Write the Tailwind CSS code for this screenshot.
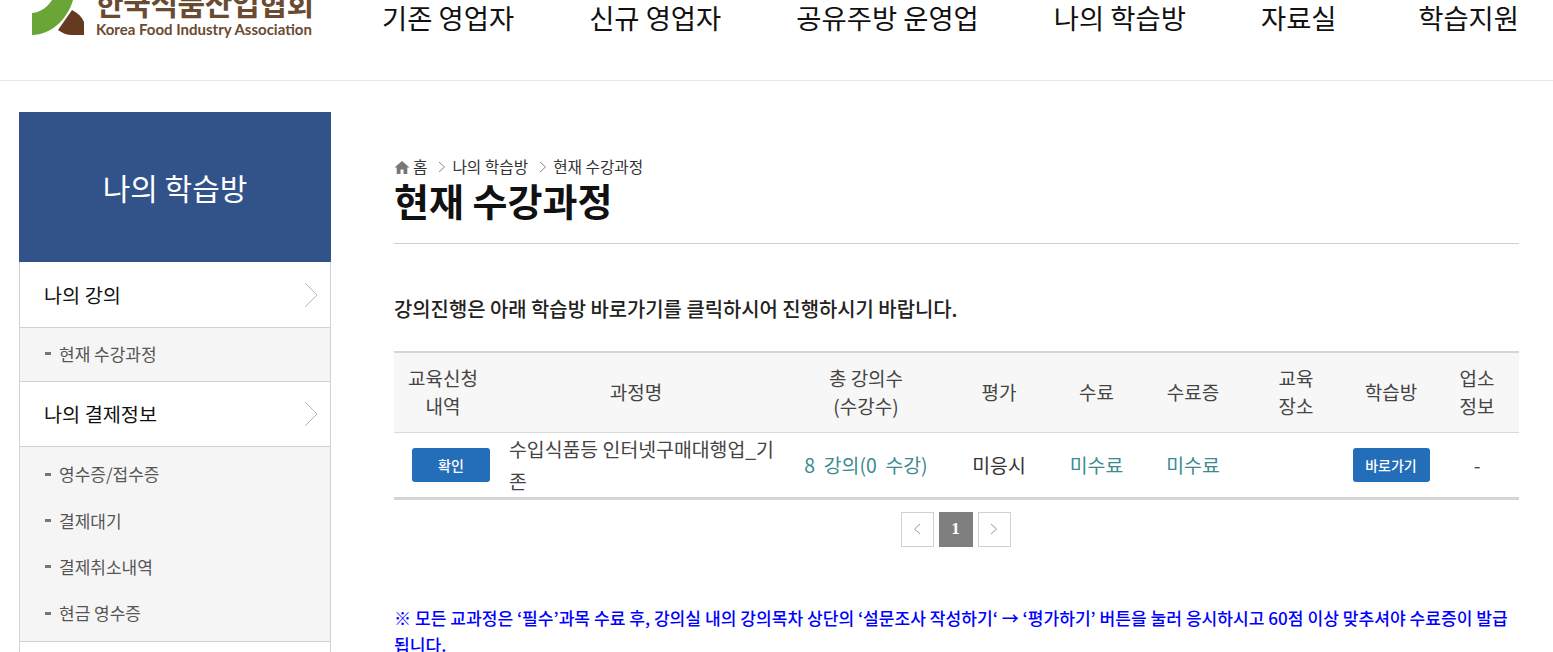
<!doctype html>
<html>
<head>
  <meta charset="UTF-8">
  <meta name="viewport" content="width=device-width, initial-scale=1.0">
  <script src="https://cdn.jsdelivr.net/npm/@tailwindcss/browser@4"></script>
  <title>현재 수강과정</title>
</head>
<body class="bg-white h-[652px] overflow-hidden font-['Noto_Sans_CJK_KR','Noto_Sans',sans-serif] text-[#222]">

  <!-- Header -->
  <header class="h-[81px] border-b border-[#e8e8e8] flex overflow-hidden">
    <div class="w-[382px] pl-[32px] flex items-start shrink-0">
      <svg class="w-[54px] h-[37px] shrink-0" viewBox="0 0 54 37">
        <path d="M0 13 C10 12 16 6 20 0 L41 0 C36 18 20 35 0 35 Z" fill="#69a537"/>
        <path d="M26 30 L40 10 C46 13 50 17 52 22 L52 35 L40 35 C35 35 30 33 26 30 Z" fill="#643b20"/>
      </svg>
      <div class="ml-[10px] text-[#6b4a32] leading-none whitespace-nowrap">
        <div class="text-[30px] font-bold mt-[-13px] h-[30px] tracking-[-0.4px]">한국식품산업협회</div>
        <div class="text-[15px] font-bold mt-[5px] font-['Lato','Noto_Sans',sans-serif]">Korea Food Industry Association</div>
      </div>
    </div>
    <nav class="flex-1 flex gap-[75px] pr-[34px] text-[27.4px] text-[#111] leading-[32px] pt-[1px] whitespace-nowrap">
      <a href="#">기존 영업자</a>
      <a href="#">신규 영업자</a>
      <a href="#">공유주방 운영업</a>
      <a href="#">나의 학습방</a>
      <a href="#">자료실</a>
      <a href="#" class="ml-auto">학습지원</a>
    </nav>
  </header>

  <div class="flex pt-[31px] pl-[19px] pr-[34px]">
    <!-- Sidebar -->
    <aside class="w-[312px] shrink-0">
      <div class="h-[150px] bg-[#315389] text-white text-[30px] flex items-center justify-center">나의 학습방</div>
      <div class="border-x border-[#d2d2d2]">
        <div class="h-[66px] flex items-center justify-between pl-[24px] pr-[11px] border-b border-[#d2d2d2] text-[19.7px] text-[#111]">
          나의 강의
          <svg class="w-[16px] h-[26px]" viewBox="0 0 16 26" fill="none" stroke="#b4b8c0"><path d="M2 1l12 12L2 25"/></svg>
        </div>
        <ul class="bg-[#f5f5f5] h-[53px] flex items-center pl-[25px] pb-[2px] text-[17px] text-[#555]">
          <li class="flex items-center gap-[8px]"><span class="w-[6px] h-[3px] bg-[#777]"></span>현재 수강과정</li>
        </ul>
        <div class="h-[66px] flex items-center justify-between pl-[24px] pr-[11px] border-y border-[#d2d2d2] text-[19.7px] text-[#111]">
          나의 결제정보
          <svg class="w-[16px] h-[26px]" viewBox="0 0 16 26" fill="none" stroke="#b4b8c0"><path d="M2 1l12 12L2 25"/></svg>
        </div>
        <ul class="bg-[#f5f5f5] h-[195px] pt-[4px] pl-[25px] text-[17px] text-[#555] border-b border-[#d2d2d2]">
          <li class="h-[46.3px] flex items-center gap-[8px]"><span class="w-[6px] h-[3px] bg-[#777]"></span>영수증/접수증</li>
          <li class="h-[46.3px] flex items-center gap-[8px]"><span class="w-[6px] h-[3px] bg-[#777]"></span>결제대기</li>
          <li class="h-[46.3px] flex items-center gap-[8px]"><span class="w-[6px] h-[3px] bg-[#777]"></span>결제취소내역</li>
          <li class="h-[46.3px] flex items-center gap-[8px]"><span class="w-[6px] h-[3px] bg-[#777]"></span>현금 영수증</li>
        </ul>
        <div class="h-[20px]"></div>
      </div>
    </aside>

    <!-- Main -->
    <main class="ml-[63px] flex-1 min-w-0">
      <div class="mt-[44px] h-[22px] flex items-center text-[15.7px] leading-[22px] text-[#333] whitespace-nowrap">
        <svg class="w-[16px] h-[14px] text-[#777] mr-[3px]" viewBox="0 0 15 14" fill="currentColor"><path d="M7.5 1L0 7.5h2.2V14h3.8V9.5h3V14h3.8V7.5H15z"/></svg>
        홈
        <svg class="w-[8px] h-[12px] ml-[11px] mr-[6px]" viewBox="0 0 8 12" fill="none" stroke="#888"><path d="M1 1l5.5 5L1 11"/></svg>
        나의 학습방
        <svg class="w-[8px] h-[12px] ml-[11px] mr-[6px]" viewBox="0 0 8 12" fill="none" stroke="#888"><path d="M1 1l5.5 5L1 11"/></svg>
        현재 수강과정
      </div>
      <h1 class="h-[65px] text-[38px] font-bold leading-[44px] text-[#111] border-b border-[#cfcfcf] box-content">현재 수강과정</h1>
      <p class="mt-[50px] h-[30px] text-[19.9px] font-medium leading-[30px] text-[#222]">강의진행은 아래 학습방 바로가기를 클릭하시어 진행하시기 바랍니다.</p>

      <table class="mt-[27px] w-full table-fixed border-collapse text-[19.4px] text-[#444] border-t-[2px] border-b-[3px] border-[#d5d5d5]">
        <colgroup>
          <col class="w-[114px]"><col class="w-[274px]"><col class="w-[168px]"><col class="w-[98px]"><col class="w-[97px]"><col class="w-[96px]"><col class="w-[110px]"><col class="w-[80px]"><col>
        </colgroup>
        <thead>
          <tr class="h-[80px] bg-[#f7f7f7] border-b border-[#d9d9d9] font-normal leading-[28px] text-[19px]">
            <th class="font-normal pr-[16px]">교육신청<br>내역</th>
            <th class="font-normal pr-[18px]">과정명</th>
            <th class="font-normal">총 강의수<br>(수강수)</th>
            <th class="font-normal">평가</th>
            <th class="font-normal">수료</th>
            <th class="font-normal">수료증</th>
            <th class="font-normal">교육<br>장소</th>
            <th class="font-normal">학습방</th>
            <th class="font-normal pl-[4px]">업소<br>정보</th>
          </tr>
        </thead>
        <tbody>
          <tr class="h-[64px] text-center leading-[32px]">
            <td><a href="#" class="inline-flex items-center justify-center w-[78px] h-[34px] rounded-[3px] bg-[#246db9] text-white text-[14px] font-medium">확인</a></td>
            <td class="text-left pl-[1px] break-all">수입식품등 인터넷구매대행업_기존</td>
            <td class="text-[#3c8a8f]">8&nbsp; 강의(0&nbsp; 수강)</td>
            <td class="text-[#333]">미응시</td>
            <td class="text-[#3c8a8f]">미수료</td>
            <td class="text-[#3c8a8f]">미수료</td>
            <td></td>
            <td><a href="#" class="inline-flex items-center justify-center w-[77px] h-[34px] rounded-[3px] bg-[#246db9] text-white text-[14px] font-medium">바로가기</a></td>
            <td class="pl-[4px]">-</td>
          </tr>
        </tbody>
      </table>

      <div class="mt-[12px] flex justify-center gap-[5px] pr-[2px]">
        <a href="#" class="w-[33px] h-[35px] border border-[#d0d0d0] flex items-center justify-center">
          <svg class="w-[8px] h-[12px]" viewBox="0 0 8 12" fill="none" stroke="#999"><path d="M7 1L1.5 6 7 11"/></svg>
        </a>
        <a href="#" class="w-[34px] h-[35px] bg-[#7f7f7f] text-white font-bold text-[17px] font-['Liberation_Serif',serif] flex items-center justify-center">1</a>
        <a href="#" class="w-[33px] h-[35px] border border-[#d0d0d0] flex items-center justify-center">
          <svg class="w-[8px] h-[12px]" viewBox="0 0 8 12" fill="none" stroke="#999"><path d="M1 1l5.5 5L1 11"/></svg>
        </a>
      </div>

      <p class="mt-[57px] text-[17.1px] font-medium leading-[27px] text-[#0000ff]">※ 모든 교과정은 ‘필수’과목 수료 후, 강의실 내의 강의목차 상단의 ‘설문조사 작성하기‘ → ‘평가하기’ 버튼을 눌러 응시하시고 60점 이상 맞추셔야 수료증이 발급됩니다.</p>
    </main>
  </div>
</body>
</html>
